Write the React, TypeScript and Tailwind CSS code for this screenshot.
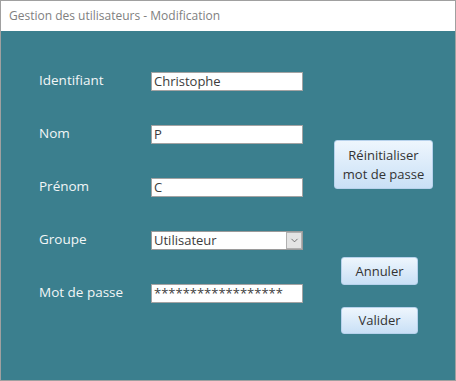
import { ChevronDown } from 'lucide-react';

const font = { fontFamily: '"Open Sans", "Noto Sans", sans-serif' };

function Field({ label, children }: { label: string; children: React.ReactNode }) {
  return (
    <div className="flex items-center h-[19px]">
      <span className="w-[112px] text-[13.5px] text-[#f2f6f7] leading-none -mt-[1px]">{label}</span>
      {children}
    </div>
  );
}

function TextBox({ value }: { value: string }) {
  return (
    <div className="w-[152px] h-[19px] bg-white border border-[#a3a3a3] flex items-center pl-[2px] text-[13px] text-[#3c3c3c] leading-none">
      {value}
    </div>
  );
}

function Button({ children, className }: { children: React.ReactNode; className: string }) {
  return (
    <button
      className={`flex items-center justify-center text-center text-[13px] leading-[19px] text-[#333] rounded-[3px] border border-[#b7d2ec] bg-gradient-to-b from-[#eef6fd] to-[#c9e0f6] ${className}`}
    >
      {children}
    </button>
  );
}

export default function App() {
  return (
    <div className="w-[456px] h-[381px] flex flex-col border border-[#a0a0a0] bg-white" style={font}>
      {/* Title bar */}
      <div className="h-[30px] flex items-center pl-[8px] text-[12px] text-[#808080] bg-white">
        Gestion des utilisateurs - Modification
      </div>

      {/* Form */}
      <div className="flex-1 bg-[#3b7f8e] flex pl-[38px]">
        <div className="flex flex-col gap-[34px] pt-[41px]">
          <Field label="Identifiant">
            <TextBox value="Christophe" />
          </Field>
          <Field label="Nom">
            <TextBox value="P" />
          </Field>
          <Field label="Prénom">
            <TextBox value="C" />
          </Field>
          <Field label="Groupe">
            <div className="w-[152px] h-[19px] bg-white border border-[#9a9a9a] flex items-center text-[13px] text-[#3c3c3c] leading-none">
              <span className="flex-1 pl-[2px]">Utilisateur</span>
              <span className="w-[16px] h-[17px] bg-[#e4e4e4] border border-[#b0b0b0] flex items-center justify-center">
                <ChevronDown size={11} strokeWidth={1.5} className="text-[#444]" />
              </span>
            </div>
          </Field>
          <Field label="Mot de passe">
            <TextBox value="******************" />
          </Field>
        </div>

        <div className="flex flex-col pl-[31px] pt-[109px]">
          <Button className="w-[99px] h-[49px]">
            Réinitialiser
            <br />
            mot de passe
          </Button>
          <Button className="w-[77px] h-[28px] ml-[7px] mt-[68px]">Annuler</Button>
          <Button className="w-[77px] h-[27px] ml-[7px] mt-[22px]">Valider</Button>
        </div>
      </div>
    </div>
  );
}
